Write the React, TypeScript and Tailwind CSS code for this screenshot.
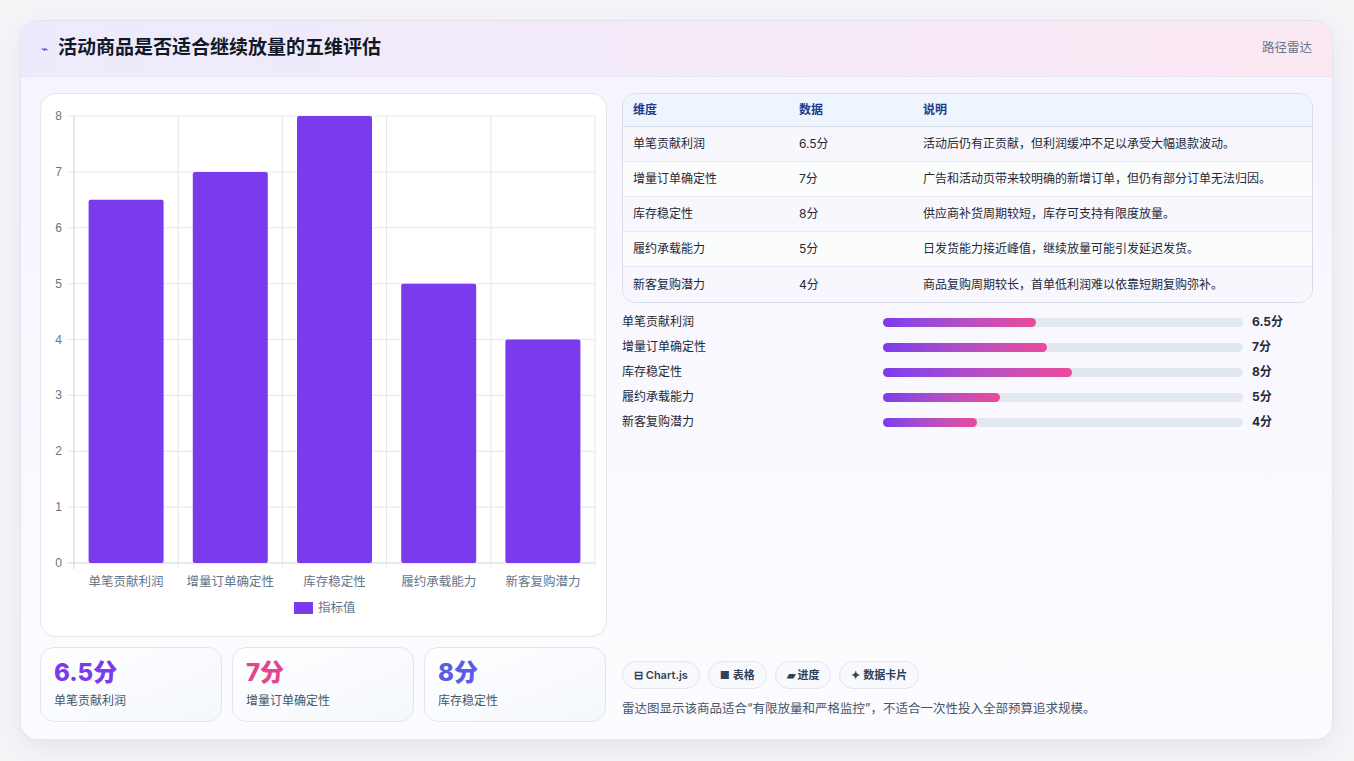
import React from "react";

const rows = [
  { n: "单笔贡献利润", v: 6.5, d: "6.5分", t: "活动后仍有正贡献，但利润缓冲不足以承受大幅退款波动。", w: 153 },
  { n: "增量订单确定性", v: 7, d: "7分", t: "广告和活动页带来较明确的新增订单，但仍有部分订单无法归因。", w: 164 },
  { n: "库存稳定性", v: 8, d: "8分", t: "供应商补货周期较短，库存可支持有限度放量。", w: 189 },
  { n: "履约承载能力", v: 5, d: "5分", t: "日发货能力接近峰值，继续放量可能引发延迟发货。", w: 117 },
  { n: "新客复购潜力", v: 4, d: "4分", t: "商品复购周期较长，首单低利润难以依靠短期复购弥补。", w: 94 },
];

function Chart() {
  const x0 = 33, x1 = 554, top = 22, bottom = 469;
  const unit = (bottom - top) / 8;
  const cw = (x1 - x0) / 5;
  return (
    <svg width="566" height="543" className="block">
      {[0, 1, 2, 3, 4, 5, 6, 7, 8].map((i) => {
        const y = bottom - i * unit;
        return (
          <g key={i}>
            <line x1={x0 - 6} x2={x1} y1={y} y2={y} stroke={i === 0 ? "#cbd5e1" : "#e5e7eb"} />
            <text x={21} y={y + 4} fontSize="12" fill="#6b7280" textAnchor="end" fontFamily="Liberation Sans, sans-serif">{i}</text>
          </g>
        );
      })}
      {[0, 1, 2, 3, 4, 5].map((i) => (
        <line key={i} x1={x0 + i * cw} x2={x0 + i * cw} y1={top} y2={bottom + 6} stroke={i === 0 ? "#cbd5e1" : "#e5e7eb"} />
      ))}
      {rows.map((r, i) => {
        const cx = x0 + i * cw + cw / 2;
        const h = r.v * unit;
        return (
          <g key={r.n}>
            <rect x={cx - 37.5} y={bottom - h} width={75} height={h} fill="#7c3aed" rx="2" />
            <text x={cx} y={bottom + 23} fontSize="12.5" fill="#64748b" textAnchor="middle" fontFamily="Noto Sans CJK SC, sans-serif">{r.n}</text>
          </g>
        );
      })}
      <rect x={253} y={508} width={19} height={12} fill="#7c3aed" />
      <text x={277} y={518} fontSize="12.5" fill="#64748b" fontFamily="Noto Sans CJK SC, sans-serif">指标值</text>
    </svg>
  );
}

export default function App() {
  const font = { fontFamily: "Inter, 'Noto Sans CJK SC', sans-serif" };
  return (
    <div className="w-[1354px] h-[761px] bg-[#f5f5f8] pt-[20px] pl-[20px]" style={font}>
      <div className="w-[1313px] h-[720px] rounded-[18px] bg-[#fcfcff] border border-[#e4e4f0] shadow-[0_8px_24px_rgba(90,80,160,0.10)] overflow-hidden flex flex-col">
        <div className="h-[56px] shrink-0 flex items-center justify-between px-[20px] bg-gradient-to-r from-[#ecebfc] to-[#fbe8f3] border-b border-[#e6e3f5]">
          <div className="flex items-center gap-[10px]">
            <span className="text-[#4f46e5] text-[12px]">⌁</span>
            <span className="text-[19px] font-bold text-[#111827]">活动商品是否适合继续放量的五维评估</span>
          </div>
          <span className="text-[12.5px] text-[#64748b]">路径雷达</span>
        </div>
        <div className="flex-1 flex gap-[15px] px-[19px] pt-[16px] bg-gradient-to-b from-[#f6f5fd] to-[#fcfcff]">
          <div className="w-[567px] flex flex-col gap-[10px]">
            <div className="h-[544px] rounded-[16px] border border-[#e3e6ef] bg-white">
              <Chart />
            </div>
            <div className="flex gap-[10px]">
              {[
                ["6.5分", "text-[#7c3aed]", "单笔贡献利润"],
                ["7分", "text-[#e2468f]", "增量订单确定性"],
                ["8分", "text-[#5b5ce6]", "库存稳定性"],
              ].map(([v, c, l]) => (
                <div key={l} className="w-[182px] h-[75px] rounded-[14px] border border-[#dfe6f3] bg-gradient-to-br from-white to-[#f4f7fd] px-[13px] pt-[10px]">
                  <div className={`text-[24px] font-extrabold leading-[30px] ${c}`}>{v}</div>
                  <div className="text-[12px] text-[#475569] mt-[4px]">{l}</div>
                </div>
              ))}
            </div>
          </div>
          <div className="w-[693px] flex flex-col">
            <div className="rounded-[14px] border border-[#d6dce8] overflow-hidden bg-white text-[12px]">
              <div className="h-[33px] flex items-center bg-[#eff5fe] border-b border-[#d6dce8] text-[#1e3a8a] font-semibold">
                <div className="w-[176px] pl-[10px]">维度</div>
                <div className="w-[124px]">数据</div>
                <div>说明</div>
              </div>
              {rows.map((r, i) => (
                <div key={r.n} className={`h-[35px] flex items-center text-[#1f2937] ${i < 4 ? "border-b border-[#e5e9f0]" : ""} ${i % 2 === 0 ? "bg-[#f8f7fe]" : "bg-[#fbfcfc]"}`}>
                  <div className="w-[176px] pl-[10px]">{r.n}</div>
                  <div className="w-[124px]">{r.d}</div>
                  <div>{r.t}</div>
                </div>
              ))}
            </div>
            <div className="mt-[11px] flex flex-col gap-[9px]">
              {rows.map((r) => (
                <div key={r.n} className="h-[16px] flex items-center text-[12px]">
                  <div className="w-[261px] text-[#1f2937]">{r.n}</div>
                  <div className="w-[360px] h-[9px] rounded-full bg-[#e2e8f0]">
                    <div className="h-full rounded-full bg-gradient-to-r from-[#7c3aed] to-[#ec4899]" style={{ width: r.w }} />
                  </div>
                  <div className="ml-[9px] font-bold text-[#1f2937]">{r.d}</div>
                </div>
              ))}
            </div>
            <div className="mt-auto mb-[20px]">
              <div className="flex gap-[8px]">
                {["⊟ Chart.js", "■ 表格", "▰ 进度", "✦ 数据卡片"].map((c) => (
                  <span key={c} className="h-[28px] px-[11px] rounded-full border border-[#e3e6ef] bg-[#f8f9fc] flex items-center text-[11px] font-semibold text-[#334155]">{c}</span>
                ))}
              </div>
              <div className="mt-[11px] text-[12.5px] text-[#475569]">雷达图显示该商品适合“有限放量和严格监控”，不适合一次性投入全部预算追求规模。</div>
            </div>
          </div>
        </div>
      </div>
    </div>
  );
}
